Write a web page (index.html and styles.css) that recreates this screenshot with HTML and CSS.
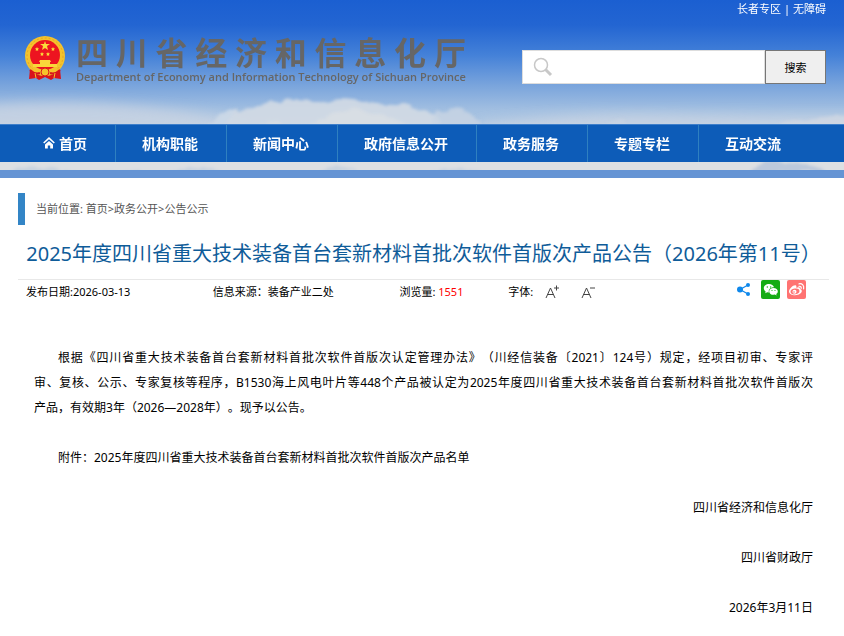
FILE: index.html
```html
<!DOCTYPE html>
<html lang="zh-CN">

<head>
    <meta charset="UTF-8">
    <title>四川省经济和信息化厅</title>
    <link rel="stylesheet" href="styles.css">
</head>

<body>
    <header class="header">
        <svg class="sky" viewBox="0 0 844 170" preserveAspectRatio="none" aria-hidden="true">
            <defs>
                <filter id="soft" x="-20%" y="-50%" width="140%" height="200%">
                    <feGaussianBlur stdDeviation="6" />
                </filter>
                <filter id="cloud" x="-5%" y="-20%" width="110%" height="140%">
                    <feTurbulence type="fractalNoise" baseFrequency="0.05 0.08" numOctaves="3" seed="4" />
                    <feDisplacementMap in="SourceGraphic" scale="10" xChannelSelector="R" yChannelSelector="G" />
                    <feGaussianBlur stdDeviation="1.5" />
                </filter>
            </defs>
            <g filter="url(#soft)" fill="#d6dae3" opacity=".6">
                <path d="M-20 105Q60 98 140 106T240 122V140H-20Z" />
                <path d="M480 124Q580 112 660 114T860 116V140H480Z" />
            </g>
            <g filter="url(#cloud)">
                <path fill="#d3dae4" opacity=".9" d="M195 132L212 122L222 113Q230 107 240 112L252 108Q262 100 280 101Q305 99 320 103Q340 96 362 102Q382 106 402 105Q420 108 440 120L446 132Z" />
                <path fill="#c7d7e8" opacity=".7" d="M206 132L220 114Q229 105 235 113L228 123L222 132Z" />
                <path fill="#dcdfe4" opacity=".7" d="M250 132Q260 118 285 124T330 116T390 118L430 132Z" />
                <path fill="#c9d5e4" opacity=".8" d="M428 132L436 112Q450 107 468 111Q480 116 482 132ZM604 132Q612 117 624 121L632 132Z" />
                <path fill="#d3d9e2" opacity=".7" d="M750 132Q800 116 860 114V132Z" />
                <path fill="#dde0e3" d="M-10 150H860V185H-10Z" />
                <path fill="#bccbdd" opacity=".6" d="M0 174Q30 163 60 169T130 170L150 174ZM168 175Q190 164 220 172ZM318 172Q340 160 358 172ZM430 173Q450 163 482 172Z" />
                <path fill="#b4c3d9" opacity=".8" d="M748 174Q760 158 790 162T830 173Z" />
            </g>
        </svg>

        <div class="top-links">
            <a href="#">长者专区</a><span>|</span><a href="#">无障碍</a>
        </div>

        <div class="banner">
            <a class="logo" href="#">
                <svg class="emblem" viewBox="0 0 40 44" aria-hidden="true">
                    <path fill="#d8141c" d="M5 33L4 43L11 42L14 44L20 41L26 44L29 42L36 43L35 33Z" />
                    <circle cx="20" cy="20" r="20" fill="#f5c32c" />
                    <circle cx="20" cy="20" r="18" fill="none" stroke="#e5a526" stroke-dasharray="2 2" />
                    <circle cx="20" cy="19" r="15" fill="#ed1420" />
                    <path fill="#fbdc3b" d="M20 5L21 8H25L22 10L23 14L20 12L17 14L18 10L15 8H19Z" />
                    <path id="star" fill="#fbdc3b" d="M12 11l.6 1.3 1.4.2-1 1 .2 1.4-1.2-.7-1.3.7.3-1.4-1-1 1.4-.2z" />
                    <use href="#star" x="16" />
                    <use href="#star" x="5" y="5" />
                    <use href="#star" x="11" y="5" />
                    <path fill="#f9d83a" d="M15 24H25L26 26H14ZM15 26H25V28H32V31H8V28H15Z" />
                    <path fill="#f5c32c" d="M7 33Q20 35 33 33L31 37Q20 39 9 37Z" />
                    <circle cx="20" cy="36" r="4" fill="#f5c32c" stroke="#d8141c" />
                    <path fill="none" stroke="#d8141c" stroke-width="2" d="M5 34Q10 39 15 37M35 34Q30 39 25 37" />
                    <path fill="none" stroke="#f5c32c" d="M10 37L11 42M30 37L29 42" />
                </svg>
                <span class="logo-text">
                    <span class="logo-cn">四川省经济和信息化厅</span>
                    <span class="logo-en">Department of Economy and Information Technology of Sichuan Province</span>
                </span>
            </a>
            <form class="search">
                <div class="search-box">
                    <svg class="search-icon" viewBox="0 0 20 20" aria-hidden="true">
                        <circle cx="8" cy="8" r="6.5" fill="none" stroke="#c8c8c8" stroke-width="1.5" />
                        <path d="M12.500 12.500L18 18" stroke="#c8c8c8" stroke-width="3" />
                    </svg>
                    <input class="search-input" type="text" aria-label="搜索内容">
                </div>
                <button class="search-button" type="button">搜索</button>
            </form>
        </div>

        <nav class="nav">
            <a href="#">
                <svg class="home-icon" viewBox="0 0 12 12" aria-hidden="true">
                    <path d="M.7 6L6 1.200L11.300 6" fill="none" stroke="#fff" stroke-width="1.600" />
                    <path d="M2 7.500L6 3.900L10 7.500V11.500H7.200V8.500H4.800V11.500H2Z" fill="#fff" />
                </svg>首页</a>
            <a href="#">机构职能</a>
            <a href="#">新闻中心</a>
            <a href="#">政府信息公开</a>
            <a href="#">政务服务</a>
            <a href="#">专题专栏</a>
            <a href="#">互动交流</a>
        </nav>
    </header>

    <main class="main">
        <div class="breadcrumb">
            当前位置: <a href="#">首页</a>&gt;<a href="#">政务公开</a>&gt;<a href="#">公告公示</a>
        </div>

        <h1 class="title">2025年度四川省重大技术装备首台套新材料首批次软件首版次产品公告（2026年第11号）</h1>

        <div class="meta">
            <span>发布日期:2026-03-13</span>
            <span>信息来源：装备产业二处</span>
            <span>浏览量: <em class="views">1551</em></span>
            <div class="font-size">
                <span>字体:</span>
                <button class="icon-button" type="button" aria-label="放大字体">
                    <svg viewBox="0 0 15 14" aria-hidden="true">
                        <path d="M1 13L5.500 3L10 13M2.500 9.500H8.500M9 3H14M11.500 .5V5.500" />
                    </svg>
                </button>
                <button class="icon-button" type="button" aria-label="缩小字体">
                    <svg viewBox="0 0 15 14" aria-hidden="true">
                        <path d="M1 13L5.500 3L10 13M2.500 9.500H8.500M9 3H14" />
                    </svg>
                </button>
            </div>
            <div class="share">
                <a href="#" aria-label="分享">
                    <svg viewBox="0 0 19 19" aria-hidden="true">
                        <path d="M12 5L4 9.500L12 14" fill="none" stroke="#0f88eb" stroke-width="1.200" />
                        <g fill="#0f88eb">
                            <circle cx="4" cy="9.500" r="3" />
                            <circle cx="12" cy="5" r="2" />
                            <circle cx="12" cy="14" r="2" />
                        </g>
                    </svg>
                </a>
                <a href="#" aria-label="微信">
                    <svg viewBox="0 0 19 19" aria-hidden="true">
                        <rect width="19" height="19" rx="2" fill="#15ac14" />
                        <path fill="#fff" d="M8 4C5 4 2.800 5.900 2.800 8.200c0 1.400.8 2.500 1.900 3.300l-.5 1.700 2-1 1.700.2c-.8-3 1.700-5.200 5.100-5.200C12.500 5.400 10.500 4 8 4z" />
                        <path fill="#fff" d="M12.500 8c-2.500 0-4.300 1.500-4.300 3.400s1.900 3.400 4.300 3.400l1.400-.2 1.700.9-.4-1.500c1-.6 1.600-1.600 1.600-2.600C16.800 9.500 15 8 12.500 8z" />
                        <g fill="#15ac14">
                            <circle cx="6.300" cy="7" r=".7" />
                            <circle cx="9.700" cy="7" r=".7" />
                            <circle cx="11" cy="10.500" r=".6" />
                            <circle cx="14" cy="10.500" r=".6" />
                        </g>
                    </svg>
                </a>
                <a href="#" aria-label="微博">
                    <svg viewBox="0 0 19 19" aria-hidden="true">
                        <rect width="19" height="19" rx="2" fill="#ff7372" />
                        <path fill="#fff" d="M9 5.500C7 4 2 8.500 2 11.500c0 2.300 3 3.700 6 3.700 4 0 6.800-2.200 6.800-4.200 0-1.200-.9-1.800-1.900-2 .5-1.700-.9-2.500-3.700-1.300.3-.9.300-1.700-.2-2.200z" />
                        <ellipse cx="8" cy="11.400" rx="4.500" ry="2.900" fill="#ff7372" transform="rotate(-8 8 11.400)" />
                        <circle cx="7.500" cy="11.700" r="2" fill="#fff" />
                        <circle cx="7" cy="12" r=".8" fill="#ff7372" />
                        <path fill="none" stroke="#fff" stroke-width="1.200" stroke-linecap="round" d="M12 6.300c1.500-.3 2.500.7 2.200 2.200M12 3.800c3.300-.5 5.300 1.800 4.600 5" />
                    </svg>
                </a>
            </div>
        </div>

        <article class="article">
            <p>根据《四川省重大技术装备首台套新材料首批次软件首版次认定管理办法》（川经信装备〔2021〕124号）规定，经项目初审、专家评<span class="keep">审、复核、</span>公示、专家复核等程序，B1530海上风电叶片等448个产品被认定为2025年度四川省重大技术装备首台套新材料首批次软件首版次<span class="keep">产品，有效期</span>3年（2026—2028年）。现予以公告。</p>
            <p>附件：2025年度四川省重大技术装备首台套新材料首批次软件首版次产品名单</p>
            <p class="sign">四川省经济和信息化厅</p>
            <p class="sign">四川省财政厅</p>
            <p class="sign">2026年3月11日</p>
        </article>
    </main>
</body>

</html>
```

FILE: styles.css
```css
:root {
    --nav-color: #0d5cb8;
    --title-color: #0f5c99;
    --accent-color: #3385c6;
    --text-color: #000;
    --text-secondary: #555;
}

* {
    box-sizing: border-box;
    margin: 0;
    padding: 0;
}

body {
    font-family: "Noto Sans", "Noto Sans CJK SC", sans-serif;
    font-size: 11px;
    color: var(--text-color);
    background: #fff;
    text-spacing-trim: space-all;
}

a {
    color: inherit;
    text-decoration: none;
}

.header {
    position: relative;
    z-index: 0;
    padding-bottom: 8px;
    border-bottom: 8px solid #6594d4;
    background: linear-gradient(#1b5fd1 0, #2365d2 25px, #4481d8 55px, #79a4dc 85px, #a2bfe1 110px, #b2c9e3 130px);
}

/* clouds behind the banner */
.sky {
    position: absolute;
    inset: 0;
    width: 100%;
    height: 100%;
    z-index: -1;
}

.top-links {
    display: flex;
    justify-content: flex-end;
    gap: 3px;
    padding: 0 18px;
    line-height: 18px;
    color: #fff;
}

.banner {
    display: flex;
    align-items: flex-end;
    justify-content: space-between;
    height: 106px;
    padding: 0 18px 40px 25px;
}

.logo {
    display: flex;
    align-items: flex-start;
    gap: 11px;
    color: #666;
}

.emblem {
    width: 40px;
    height: 44px;
}

.logo-text {
    display: grid;
    font-weight: bold;
}

.logo-cn {
    font-size: 32px;
    line-height: 34px;
    text-align-last: justify;
    text-justify: inter-character;
    width: 0;
    min-width: 100%;
}

.logo-en {
    font-family: "Open Sans", "Noto Sans", sans-serif;
    font-size: 11px;
    font-weight: 600;
    line-height: 14px;
    white-space: nowrap;
}

.search {
    display: flex;
    width: 304px;
    height: 34px;
}

.search-box {
    display: flex;
    flex: 1;
    align-items: center;
    padding-left: 10px;
    background: #fff;
    border: 1px solid #ddd;
}

.search-icon {
    width: 20px;
    height: 20px;
}

.search-input {
    flex: 1;
    min-width: 0;
    height: 100%;
    padding: 0 8px;
    border: none;
    outline: none;
    background: none;
}

.search-button {
    width: 61px;
    border: 1px solid #767676;
    background: #efefef;
    font-family: inherit;
    font-size: 11px;
    cursor: pointer;
}

.nav {
    display: flex;
    height: 38px;
    padding-left: 17px;
    background: var(--nav-color);
    border-top: 1px solid #3f7fca;
    color: #fff;
    font-size: 14px;
    font-weight: bold;
}

.nav a {
    display: flex;
    align-items: center;
    gap: 4px;
    padding: 0 28px 2px 26px;
    border-right: 1px solid #2f80c0;
}

.nav a:last-child {
    border-right: none;
}

.home-icon {
    width: 12px;
    height: 12px;
}

.main {
    padding: 15px 15px 0 18px;
}

.breadcrumb {
    padding-left: 11px;
    border-left: 7px solid var(--accent-color);
    line-height: 32px;
    color: var(--text-secondary);
}

.title {
    padding: 14px 0 10px;
    font-size: 20px;
    font-weight: normal;
    line-height: 30px;
    text-align: center;
    color: var(--title-color);
    border-bottom: 1px solid #e8e8e8;
}

.meta {
    display: grid;
    grid-template-columns: 187fr 187fr 109fr 228fr 70px;
    align-items: start;
    height: 25px;
    padding: 0 23px 0 8px;
    line-height: 24px;
}

.views {
    font-style: normal;
    color: #f00;
}

.font-size {
    display: flex;
    align-items: center;
    gap: 12px;
}

.icon-button {
    width: 24px;
    height: 14px;
    border: none;
    background: none;
    cursor: pointer;
}

.icon-button svg {
    display: block;
    width: 15px;
    height: 14px;
    fill: none;
    stroke: #444;
}

.share {
    display: flex;
    justify-content: space-between;
}

.share svg {
    display: block;
    width: 19px;
    height: 19px;
}

.article {
    padding: 40px 16px 0;
    font-size: 12px;
    line-height: 25px;
    text-align: justify;
}

.article p {
    margin-bottom: 25px;
    text-indent: 2em;
}

.article .sign {
    text-align: right;
    text-indent: 0;
}

.article .sign:last-child {
    margin-bottom: 0;
}

.keep {
    white-space: nowrap;
}
```
